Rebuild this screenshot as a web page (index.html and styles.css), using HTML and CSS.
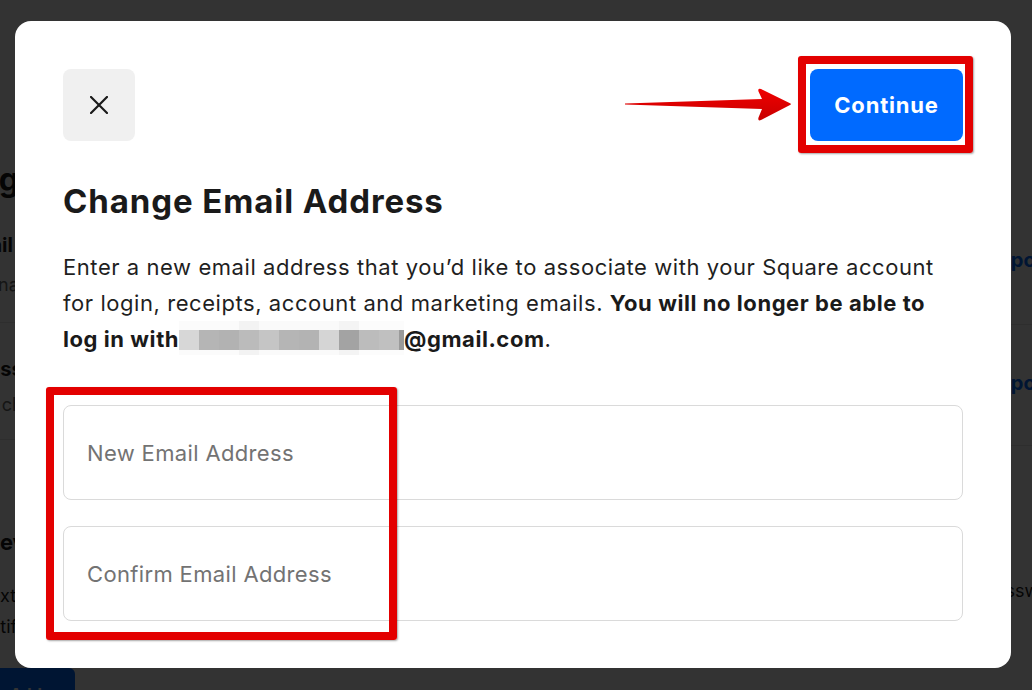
FILE: index.html
```html
<!DOCTYPE html>
<html lang="en">
<head>
<meta charset="utf-8">
<title>Change Email Address</title>
<link rel="stylesheet" href="styles.css">
</head>
<body>
<div class="page">
  <div class="bg-left">
    <h1 class="bg-title">Sign in &amp; security</h1>
    <div class="bg-row first">
      <div class="bg-label email">Email</div>
      <div class="bg-sub name">name@example.com</div>
    </div>
    <div class="bg-row second">
      <div class="bg-label pass">Password</div>
      <div class="bg-sub changed">Last changed recently</div>
    </div>
    <h2 class="bg-section">Devices</h2>
    <p class="bg-text"><span class="extra">extra layer of security</span><br><span class="notif">Notifications</span></p>
    <div class="bg-button">Add</div>
  </div>
  <div class="bg-right">
    <div class="bg-link first">Report</div>
    <div class="bg-link second">Report</div>
    <div class="bg-plain">Password</div>
  </div>
</div>

<div class="overlay">
  <div class="modal" role="dialog" aria-labelledby="modal-title">
    <div class="modal-head">
      <button class="close-btn" aria-label="Close">
        <svg width="18" height="18" viewBox="0 0 18 18" aria-hidden="true"><path d="M1 1 L17 17 M17 1 L1 17" stroke="#1a1a1a" stroke-width="2.2" stroke-linecap="square" fill="none"/></svg>
      </button>
      <button class="continue-btn">Continue</button>
    </div>
    <h1 class="modal-title" id="modal-title">Change Email Address</h1>
    <p class="modal-text">Enter a new email address that you’d like to associate with your Square account for login, receipts, account and marketing emails. <strong>You will no longer be able to log in with<span class="redacted" aria-label="hidden"></span>@gmail.com</strong>.</p>
    <div class="fields">
      <input class="field" type="email" placeholder="New Email Address">
      <input class="field" type="email" placeholder="Confirm Email Address">
    </div>
  </div>
</div>

<div class="mark mark-continue"></div>
<div class="mark mark-fields"></div>
<svg class="arrow" width="180" height="44" viewBox="0 0 180 44" aria-hidden="true">
  <defs>
    <linearGradient id="ag" x1="0" y1="0" x2="0" y2="1">
      <stop offset="0" stop-color="#f00000"/>
      <stop offset="1" stop-color="#c80000"/>
    </linearGradient>
  </defs>
  <path d="M5 19.6 L142 15 L138.5 7.5 Q137.5 4 141 5 L170 19.2 Q172 20 170 21 L141 36 Q137.5 37.5 138.5 33.5 L142 25 L5 20.6 Z" fill="url(#ag)"/>
</svg>
</body>
</html>
```
FILE: styles.css
```css
* { box-sizing: border-box; }
html, body { margin: 0; padding: 0; }
body {
  width: 1032px;
  height: 690px;
  overflow: hidden;
  background: #ffffff;
  font-family: Inter, "Noto Sans", "Liberation Sans", sans-serif;
  color: #1a1a1a;
  position: relative;
}

/* ---------- page behind the dialog ---------- */
.page {
  display: flex;
  height: 690px;
  overflow: hidden;
  white-space: nowrap;
}
.bg-left {
  flex: none;
  width: 320px;
  display: flex;
  flex-direction: column;
}
.bg-title {
  margin: 160px 0 0;
  font-size: 32px;
  line-height: 40px;
  font-weight: 700;
  text-indent: -31px;
}
.bg-row { border-bottom: 1px solid #e6e6e6; }
.bg-row.first { padding: 31px 0 23px; }
.bg-row.second { padding: 32px 0 20px; }
.bg-label { font-size: 20px; line-height: 28px; font-weight: 700; }
.bg-sub { font-size: 18px; line-height: 28px; color: #6a6a6a; }
.bg-label.email { text-indent: -40px; }
.bg-label.pass { text-indent: -24px; }
.bg-sub.name { margin-top: 12px; text-indent: -2px; }
.bg-sub.changed { margin-top: 8px; text-indent: -39px; }
.bg-section {
  margin: 88px 0 0;
  font-size: 22px;
  line-height: 28px;
  font-weight: 700;
  text-indent: -16px;
}
.bg-text {
  margin: 24px 0 0;
  font-size: 18px;
  line-height: 31px;
}
.bg-text span { display: inline-block; }
.bg-text .extra { margin-left: -10px; }
.bg-text .notif { margin-left: -24px; }
.bg-button {
  flex: none;
  margin-top: 26px;
  width: 75px;
  height: 52px;
  line-height: 52px;
  padding-left: 10px;
  background: #006aff;
  color: #fff;
  font-weight: 700;
  border-radius: 0 6px 6px 0;
}
.bg-right {
  flex: none;
  width: 46px;
  margin-left: auto;
  display: flex;
  flex-direction: column;
}
.bg-link {
  color: #006aff;
  font-size: 20px;
  line-height: 28px;
  font-weight: 700;
  border-bottom: 1px solid #e6e6e6;
}
.bg-link.first { margin-top: 246px; padding-bottom: 50px; }
.bg-link.second { padding-top: 44px; padding-bottom: 48px; }
.bg-plain {
  margin-top: 131px;
  margin-left: -2px;
  font-size: 18px;
  line-height: 28px;
}

/* ---------- dialog ---------- */
.overlay {
  position: absolute;
  inset: 0;
  background: rgba(0, 0, 0, 0.8);
  padding: 21px 21px 0 15px;
}
.modal {
  background: #ffffff;
  border-radius: 16px;
  padding: 48px 48px 47px;
}
.modal-head {
  display: flex;
  justify-content: space-between;
  align-items: center;
}
.close-btn {
  width: 72px;
  height: 72px;
  border: 0;
  border-radius: 8px;
  background: #f0f0f0;
  display: flex;
  align-items: center;
  justify-content: center;
  padding: 0;
}
.close-btn svg { display: block; }
.continue-btn {
  height: 72px;
  width: 153px;
  border: 0;
  border-radius: 8px;
  background: #006aff;
  color: #ffffff;
  font-family: inherit;
  font-size: 22px;
  font-weight: 700;
  letter-spacing: 0.8px;
  padding: 0;
}
.modal-title {
  margin: 40px 0 0;
  font-size: 33px;
  line-height: 40px;
  font-weight: 700;
  letter-spacing: 0.9px;
  color: #1a1a1a;
}
.modal-text {
  margin: 28px 0 0;
  font-size: 22px;
  line-height: 36px;
  letter-spacing: 0.56px;
  color: #1f1f1f;
}
.modal-text strong { font-weight: 700; color: #1a1a1a; }
.redacted {
  display: inline-block;
  width: 225px;
  height: 34px;
  vertical-align: -8px;
  background:
    linear-gradient(to right,
      #d7d7d7 0 20px, #b5b5b5 20px 40px, #b2b2b2 40px 60px, #bbbbbb 60px 80px,
      #c5c5c5 80px 100px, #b5b5b5 100px 120px, #b3b3b3 120px 140px, #d5d5d5 140px 160px,
      #a3a3a3 160px 180px, #bcbcbc 180px 200px, #c0c0c0 200px 220px, #9a9a9a 220px 225px)
      0 9px / 100% 20px no-repeat,
    linear-gradient(to right,
      #fbfbfb 0 60px, #f3f3f3 60px 80px, #fafafa 80px 160px, #f4f4f4 160px 180px, #fcfcfc 180px 225px);
}
.fields {
  margin-top: 48px;
  display: flex;
  flex-direction: column;
  gap: 26px;
}
.field {
  display: block;
  width: 100%;
  height: 95px;
  border: 1px solid #dadada;
  border-radius: 8px;
  padding: 0 23px;
  font-family: inherit;
  font-size: 22px;
  letter-spacing: 0.35px;
  color: #1a1a1a;
  background: #fff;
  outline: none;
}
.field::placeholder { color: #737373; }

/* ---------- annotations drawn over the screenshot ---------- */
.mark {
  position: absolute;
  border: 8px solid #e30000;
  border-radius: 3px;
  box-shadow: 1px 1px 2px rgba(0, 0, 0, 0.35);
}
.mark-continue { left: 798px; top: 56px; width: 175px; height: 97px; }
.mark-fields { left: 46px; top: 387px; width: 351px; height: 253px; }
.arrow {
  position: absolute;
  left: 620px;
  top: 84px;
}
```
